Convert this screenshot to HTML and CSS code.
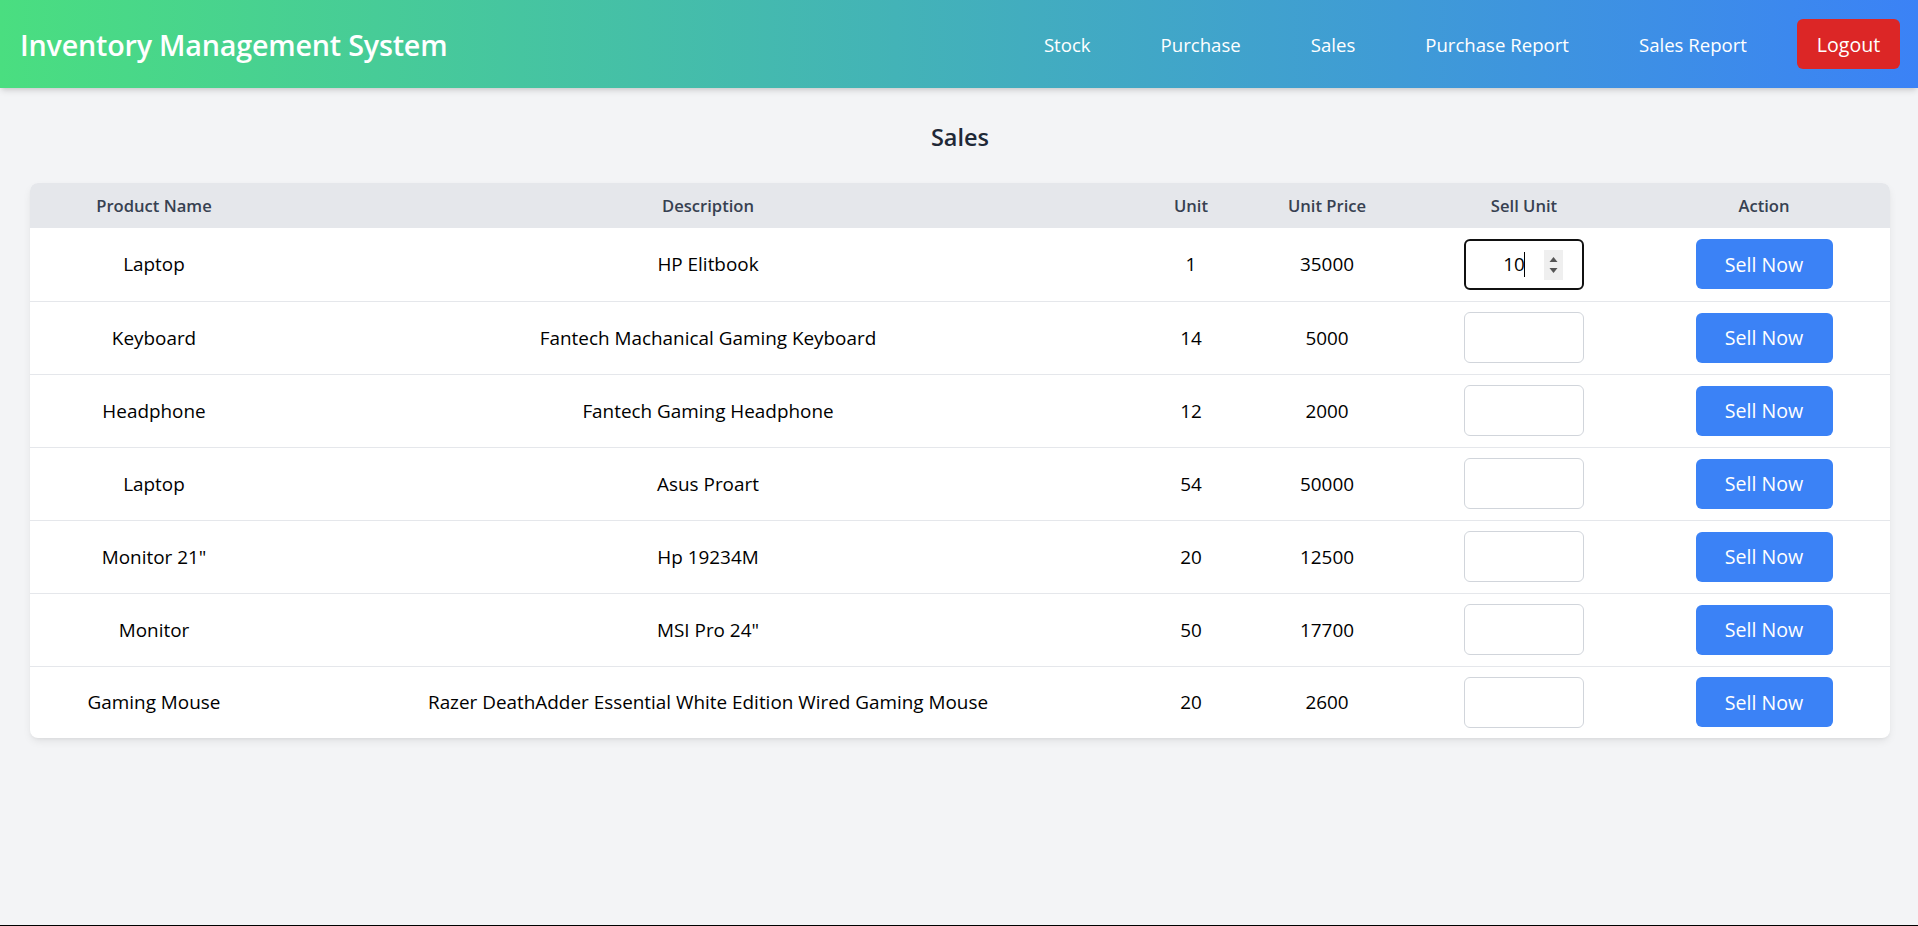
FILE: index.html
```html
<!DOCTYPE html>
<html lang="en">
<head>
<meta charset="utf-8">
<title>Inventory Management System - Sales</title>
<link rel="stylesheet" href="styles.css">
</head>
<body>
<header class="topbar">
  <h1 class="brand">Inventory Management System</h1>
  <nav class="nav">
    <a class="nav-link" href="#">Stock</a>
    <a class="nav-link" href="#">Purchase</a>
    <a class="nav-link" href="#">Sales</a>
    <a class="nav-link" href="#">Purchase Report</a>
    <a class="nav-link" href="#">Sales Report</a>
    <button class="logout" type="button">Logout</button>
  </nav>
</header>

<main class="content">
  <h2 class="page-title">Sales</h2>
  <div class="card">
    <table class="sales-table">
      <colgroup>
        <col class="c-name">
        <col class="c-desc">
        <col class="c-unit">
        <col class="c-price">
        <col class="c-sell">
        <col class="c-action">
      </colgroup>
      <thead>
        <tr>
          <th>Product Name</th>
          <th>Description</th>
          <th>Unit</th>
          <th>Unit Price</th>
          <th>Sell Unit</th>
          <th>Action</th>
        </tr>
      </thead>
      <tbody>
        <tr>
          <td>Laptop</td>
          <td>HP Elitbook</td>
          <td>1</td>
          <td>35000</td>
          <td>
            <div class="qty-wrap">
              <input class="qty qty-active" type="text" value="10">
              <span class="caret"></span>
              <span class="spinner">
                <svg width="19" height="30" viewBox="0 0 19 30"><path d="M5.5 12 L9.5 7 L13.5 12 Z" fill="#555"/><path d="M5.5 18 L9.5 23 L13.5 18 Z" fill="#555"/></svg>
              </span>
            </div>
          </td>
          <td><button class="sell" type="button">Sell Now</button></td>
        </tr>
        <tr>
          <td>Keyboard</td>
          <td>Fantech Machanical Gaming Keyboard</td>
          <td>14</td>
          <td>5000</td>
          <td><div class="qty-wrap"><input class="qty" type="text"></div></td>
          <td><button class="sell" type="button">Sell Now</button></td>
        </tr>
        <tr>
          <td>Headphone</td>
          <td>Fantech Gaming Headphone</td>
          <td>12</td>
          <td>2000</td>
          <td><div class="qty-wrap"><input class="qty" type="text"></div></td>
          <td><button class="sell" type="button">Sell Now</button></td>
        </tr>
        <tr>
          <td>Laptop</td>
          <td>Asus Proart</td>
          <td>54</td>
          <td>50000</td>
          <td><div class="qty-wrap"><input class="qty" type="text"></div></td>
          <td><button class="sell" type="button">Sell Now</button></td>
        </tr>
        <tr>
          <td>Monitor 21"</td>
          <td>Hp 19234M</td>
          <td>20</td>
          <td>12500</td>
          <td><div class="qty-wrap"><input class="qty" type="text"></div></td>
          <td><button class="sell" type="button">Sell Now</button></td>
        </tr>
        <tr>
          <td>Monitor</td>
          <td>MSI Pro 24"</td>
          <td>50</td>
          <td>17700</td>
          <td><div class="qty-wrap"><input class="qty" type="text"></div></td>
          <td><button class="sell" type="button">Sell Now</button></td>
        </tr>
        <tr>
          <td>Gaming Mouse</td>
          <td>Razer DeathAdder Essential White Edition Wired Gaming Mouse</td>
          <td>20</td>
          <td>2600</td>
          <td><div class="qty-wrap"><input class="qty" type="text"></div></td>
          <td><button class="sell" type="button">Sell Now</button></td>
        </tr>
      </tbody>
    </table>
  </div>
</main>
</body>
</html>
```

FILE: styles.css
```css
* { box-sizing: border-box; }

html { height: 100%; }

body {
  margin: 0;
  min-height: 100%;
  background: #f3f4f6;
  font-family: "Open Sans", "Noto Sans", sans-serif;
  color: #000;
  border-bottom: 1px solid #000;
}

.topbar {
  height: 88px;
  display: flex;
  align-items: center;
  justify-content: space-between;
  padding: 0 18px 0 20px;
  background: linear-gradient(90deg, #4ade80 0%, #3b82f6 100%);
  box-shadow: 0 4px 6px -1px rgba(0,0,0,0.12), 0 2px 4px -2px rgba(0,0,0,0.1);
}

.brand {
  margin: 0;
  color: #fff;
  font-size: 28.7px;
  font-weight: 600;
  letter-spacing: -0.2px;
}

.nav {
  display: flex;
  align-items: center;
  gap: 30px;
}

.nav-link {
  color: #fff;
  text-decoration: none;
  font-size: 18.6px;
  padding: 0 20px;
}

.logout {
  width: 103px;
  height: 50px;
  border: 0;
  border-radius: 6px;
  background: #dc2626;
  color: #fff;
  font-family: inherit;
  font-size: 19.6px;
  cursor: pointer;
}

.content {
  padding: 33px 28px 0 30px;
}

.page-title {
  margin: 0 0 30px;
  text-align: center;
  font-size: 23.5px;
  line-height: 32px;
  font-weight: 600;
  color: #1f2937;
}

.card {
  background: #fff;
  border-radius: 8px;
  overflow: hidden;
  box-shadow: 0 4px 10px -2px rgba(0,0,0,0.1), 0 2px 4px -2px rgba(0,0,0,0.06);
}

.sales-table {
  width: 100%;
  border-collapse: collapse;
  table-layout: fixed;
}

.c-name { width: 248px; }
.c-desc { width: 860px; }
.c-unit { width: 106px; }
.c-price { width: 166px; }
.c-sell { width: 228px; }
.c-action { width: 252px; }

.sales-table th {
  height: 45px;
  padding: 0;
  background: #e5e7eb;
  color: #374151;
  font-size: 16.6px;
  font-weight: 600;
  text-align: center;
}

.sales-table td {
  height: 73px;
  padding: 0;
  text-align: center;
  font-size: 18.9px;
  color: #000;
  border-bottom: 1px solid #e5e7eb;
}

.sales-table tbody tr:last-child td { border-bottom: 0; height: 72px; }

.qty-wrap {
  position: relative;
  width: 120px;
  height: 51px;
  margin: 0 auto;
}

.qty {
  width: 100%;
  height: 100%;
  border: 1px solid #d1d5db;
  border-radius: 6px;
  background: #fff;
  font-family: inherit;
  font-size: 18.9px;
  color: #000;
  text-align: center;
  padding: 0 12px;
  outline: none;
}

.qty-active {
  border: 2px solid #111;
  padding: 0 30px 0 10px;
  text-align: center;
}

.caret {
  position: absolute;
  left: 60px;
  top: 13px;
  width: 1px;
  height: 25px;
  background: #000;
}

.spinner {
  position: absolute;
  left: 80px;
  top: 11px;
  width: 19px;
  height: 30px;
  background: #efefef;
  display: block;
}

.spinner svg { display: block; }

.sell {
  width: 137px;
  height: 50px;
  border: 0;
  border-radius: 6px;
  background: #3b82f6;
  color: #fff;
  font-family: inherit;
  font-size: 19.6px;
  cursor: pointer;
}
```
